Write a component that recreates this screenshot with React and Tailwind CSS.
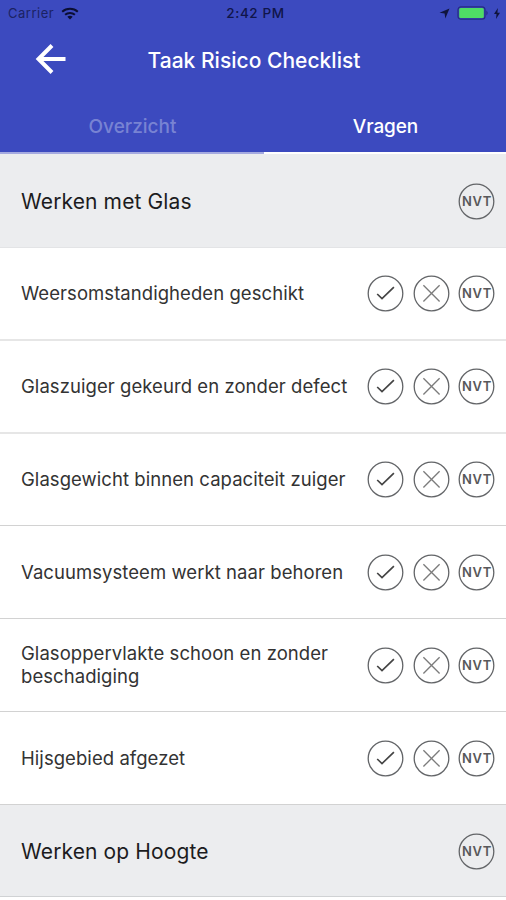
const CIRCLE = { cx: 18.5, cy: 18.5, r: 17.3, fill: 'none', stroke: '#636568', strokeWidth: 1.3 };

function Check() {
  return (
    <button aria-label="Akkoord" className="size-[37px] shrink-0">
      <svg viewBox="0 0 37 37" className="size-[37px]">
        <circle {...CIRCLE} />
        <path d="M10.2 19L15 23.5L26.9 12.2" fill="none" stroke="#444" strokeWidth="1.7" />
      </svg>
    </button>
  );
}

function Cross() {
  return (
    <button aria-label="Niet akkoord" className="size-[37px] shrink-0">
      <svg viewBox="0 0 37 37" className="size-[37px]">
        <circle {...CIRCLE} />
        <path d="M10.4 10.3L26.6 26.6M26.6 10.3L10.4 26.6" fill="none" stroke="#7c7c7c" strokeWidth="1.35" />
      </svg>
    </button>
  );
}

function Nvt() {
  return (
    <button className="grid size-[37px] shrink-0 place-items-center">
      <svg viewBox="0 0 37 37" className="col-start-1 row-start-1 size-[37px]">
        <circle {...CIRCLE} />
      </svg>
      <span className="col-start-1 row-start-1 pl-px text-[13px] font-semibold leading-none tracking-[0.7px] text-[#58585a]">NVT</span>
    </button>
  );
}

const rows = [
  { text: 'Weersomstandigheden geschikt', height: 'h-[93px]', line: 'border-b-2 border-[#e6e6e6]' },
  { text: 'Glaszuiger gekeurd en zonder defect', height: 'h-[93px]', line: 'border-b-2 border-[#e6e6e6]' },
  { text: 'Glasgewicht binnen capaciteit zuiger', height: 'h-[92px]', line: 'border-b border-[#d2d2d2]' },
  { text: 'Vacuumsysteem werkt naar behoren', height: 'h-[93px]', line: 'border-b border-[#d2d2d2]' },
  { text: 'Glasoppervlakte schoon en zonder beschadiging', height: 'h-[93px]', line: 'border-b border-[#d2d2d2]' },
  { text: 'Hijsgebied afgezet', height: 'h-[93px]', line: 'border-b border-[#d2d2d2]' },
];

function StatusBar() {
  return (
    <div className="grid h-[26px] grid-cols-3 items-center text-[13px] text-[#10154a]">
      <div className="flex items-center gap-[7px] pl-2">
        <span className="pt-px tracking-[0.5px] text-[#1b2263]">Carrier</span>
        <svg viewBox="0 0 18 13" className="h-[13px] w-[18px]" fill="none" stroke="#0b0e33" strokeWidth="2">
          <path d="M1.2 4.7C5.5 .8 12.5 .8 16.8 4.7M4.1 7.7C6.8 5.3 11.2 5.3 13.9 7.7" />
          <path d="M6.3 9.7Q9 7.6 11.7 9.7L9 12.5Z" fill="#0b0e33" stroke="none" />
        </svg>
      </div>
      <span className="whitespace-nowrap pl-[5px] pt-px text-center text-[13.5px] font-medium tracking-[0.6px]">2:42 PM</span>
      <div className="flex items-center justify-end pr-[6px]">
        <svg viewBox="0 0 11 11" className="mr-[7px] size-[11px]" fill="#10143c"><path d="M10.5 .5L6.3 10.5L5.6 5.4L.5 4.7Z" /></svg>
        <svg viewBox="0 0 32 14" className="mr-[5px] h-[14px] w-[32px]">
          <rect x="1" y=".8" width="27" height="12.4" rx="3" fill="none" stroke="#262c82" strokeWidth="1.2" />
          <rect x="2.2" y="2" width="24.6" height="10" rx="1.5" fill="#4fdc65" />
          <path d="M29.4 4.5Q32 7 29.4 9.5Z" fill="#262c82" />
        </svg>
        <svg viewBox="0 0 6 11" className="h-[11px] w-[6px]" fill="#10143c"><path d="M3.9 0L0 6H2.5L2 11L6 4.7H3.4Z" /></svg>
      </div>
    </div>
  );
}

function Section({ title, height, line }) {
  return (
    <div className={`flex ${height} items-center justify-between bg-[#ecedef] pl-[21px] pr-[11px] pt-[2px] ${line}`}>
      <h2 className="text-[21px] tracking-[0.13px] text-[#1c1c1e]">{title}</h2>
      <Nvt />
    </div>
  );
}

export default function App() {
  return (
    <div className="h-[900px] w-full overflow-hidden bg-white font-['Inter','Liberation_Sans',sans-serif]">
      <header className="flex h-[154px] flex-col bg-[#3c4abf]">
        <StatusBar />
        <div className="grid h-[70px] grid-cols-[65px_1fr_65px] items-center">
          <button aria-label="Terug" className="pb-[4px] pl-[34px]">
            <svg viewBox="0 0 32 32" className="size-8" fill="none" stroke="#fff" strokeWidth="4">
              <path d="M4.5 16H31.5M18 2.5L4.5 16L18 29.5" />
            </svg>
          </button>
          <h1 className="pl-[2px] text-center text-[21px] font-medium tracking-[0.02px] text-white">Taak Risico Checklist</h1>
        </div>
        <nav className="grid grow grid-cols-[264px_1fr] text-center text-[19px] font-medium">
          <div className="border-b-2 border-[#a5aae0] pl-px pt-[17px] text-[#7883d3]">Overzicht</div>
          <div className="border-b-2 border-white pl-px pt-[17px] tracking-[-0.1px] text-white">Vragen</div>
        </nav>
      </header>
      <main>
        <Section title="Werken met Glas" height="h-[94px]" line="border-b border-[#e3e4e6]" />
        {rows.map((r) => (
          <div key={r.text} className={`flex ${r.height} items-center pl-[21px] pr-[11px] ${r.line}`}>
            <p className="min-w-0 grow text-[18.5px] leading-[23px] tracking-[0.06px] text-[#333]">{r.text}</p>
            <div className="flex shrink-0 gap-[8.5px]">
              <Check />
              <Cross />
              <Nvt />
            </div>
          </div>
        ))}
        <Section title="Werken op Hoogte" height="h-[92px]" line="border-b border-[#d0d2d4]" />
      </main>
    </div>
  );
}
